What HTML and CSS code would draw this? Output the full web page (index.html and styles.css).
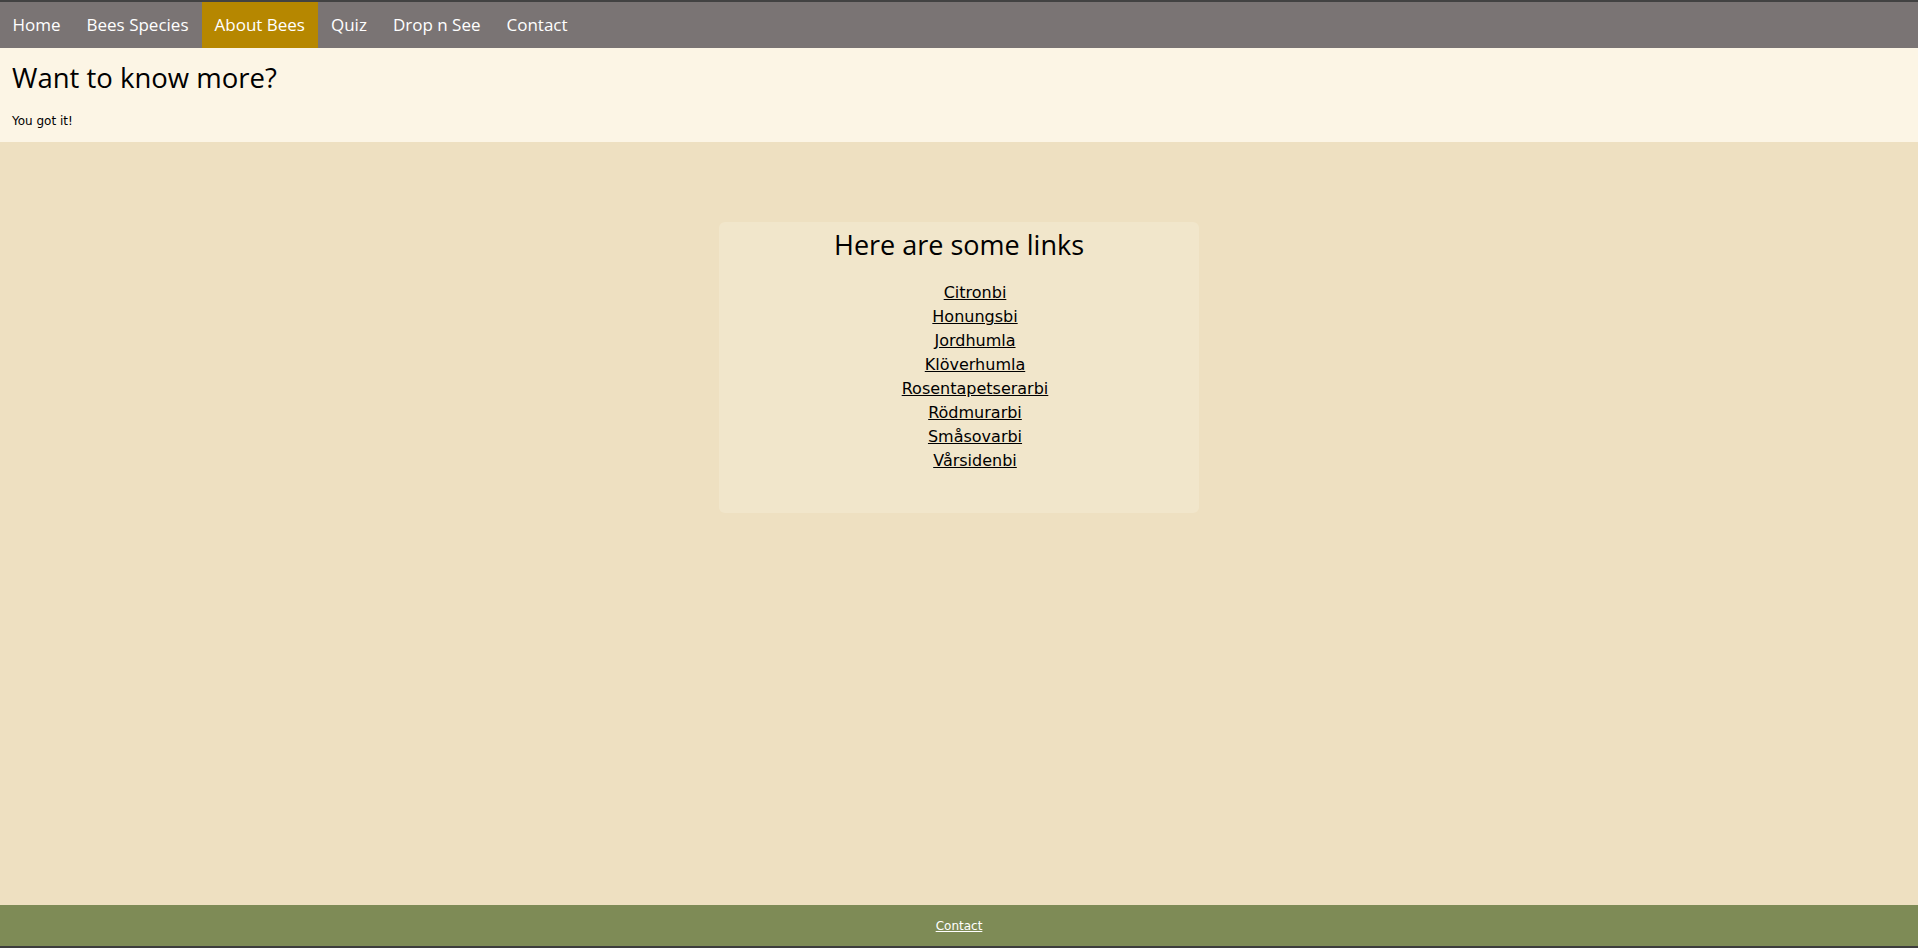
FILE: index.html
```html
<!DOCTYPE html>
<html lang="sv">
<head>
<meta charset="utf-8">
<title>About Bees</title>
<link rel="stylesheet" href="styles.css">
</head>
<body>
<div class="page">
  <nav class="topnav">
    <a href="#" class="nav-link">Home</a>
    <a href="#" class="nav-link">Bees Species</a>
    <a href="#" class="nav-link active">About Bees</a>
    <a href="#" class="nav-link">Quiz</a>
    <a href="#" class="nav-link">Drop n See</a>
    <a href="#" class="nav-link">Contact</a>
  </nav>
  <header class="intro">
    <h1 class="intro-title">Want to know more?</h1>
    <p class="intro-text">You got it!</p>
  </header>
  <main class="content">
    <section class="card">
      <h2 class="card-title">Here are some links</h2>
      <ul class="link-list">
        <li><a href="#">Citronbi</a></li>
        <li><a href="#">Honungsbi</a></li>
        <li><a href="#">Jordhumla</a></li>
        <li><a href="#">Klöverhumla</a></li>
        <li><a href="#">Rosentapetserarbi</a></li>
        <li><a href="#">Rödmurarbi</a></li>
        <li><a href="#">Småsovarbi</a></li>
        <li><a href="#">Vårsidenbi</a></li>
      </ul>
    </section>
  </main>
  <footer class="footer">
    <a href="#" class="footer-link">Contact</a>
  </footer>
</div>
</body>
</html>
```

FILE: styles.css
```css
* { box-sizing: border-box; }
html, body { margin: 0; padding: 0; }
body {
  background: #eee0c1;
  font-family: "Open Sans", "Noto Sans", sans-serif;
  color: #000;
}
.page {
  min-height: 100vh;
  display: flex;
  flex-direction: column;
}
.topnav {
  display: flex;
  background: #7a7474;
  border-top: 2px solid #424242;
  height: 48px;
}
.nav-link {
  display: flex;
  align-items: center;
  padding: 0 13.5px 2px 12.5px;
  color: #fff;
  text-decoration: none;
  font-family: "Open Sans", sans-serif;
  font-size: 17px;
}
.nav-link.active { background: #b68700; }
.intro {
  background: #fcf5e5;
  height: 94px;
  padding: 12px 12px 0;
}
.intro-title {
  margin: 0;
  font-family: "Open Sans", sans-serif;
  font-weight: 400;
  font-size: 27.5px;
  line-height: 36px;
}
.intro-text {
  margin: 18px 0 0;
  font-family: "DejaVu Sans", sans-serif;
  font-size: 12px;
}
.content {
  flex: 1;
  display: flex;
  justify-content: center;
  align-items: flex-start;
  padding-top: 80px;
}
.card {
  width: 480px;
  height: 291px;
  background: #f1e6cb;
  border-radius: 6px;
  padding-top: 5px;
}
.card-title {
  margin: 0;
  text-align: center;
  font-family: "Open Sans", sans-serif;
  font-weight: 400;
  font-size: 27px;
  line-height: 36px;
}
.link-list {
  list-style: none;
  margin: 18px 0 0;
  padding: 0 0 0 32px;
  text-align: center;
  font-family: "DejaVu Sans", sans-serif;
  font-size: 16px;
  line-height: 24px;
}
.link-list a { color: #000; }
.footer {
  height: 43px;
  background: #7e8b56;
  border-bottom: 2px solid #3d3d3d;
  display: flex;
  align-items: center;
  justify-content: center;
}
.footer-link {
  color: #fff;
  font-family: "DejaVu Sans", sans-serif;
  font-size: 12px;
}
```
